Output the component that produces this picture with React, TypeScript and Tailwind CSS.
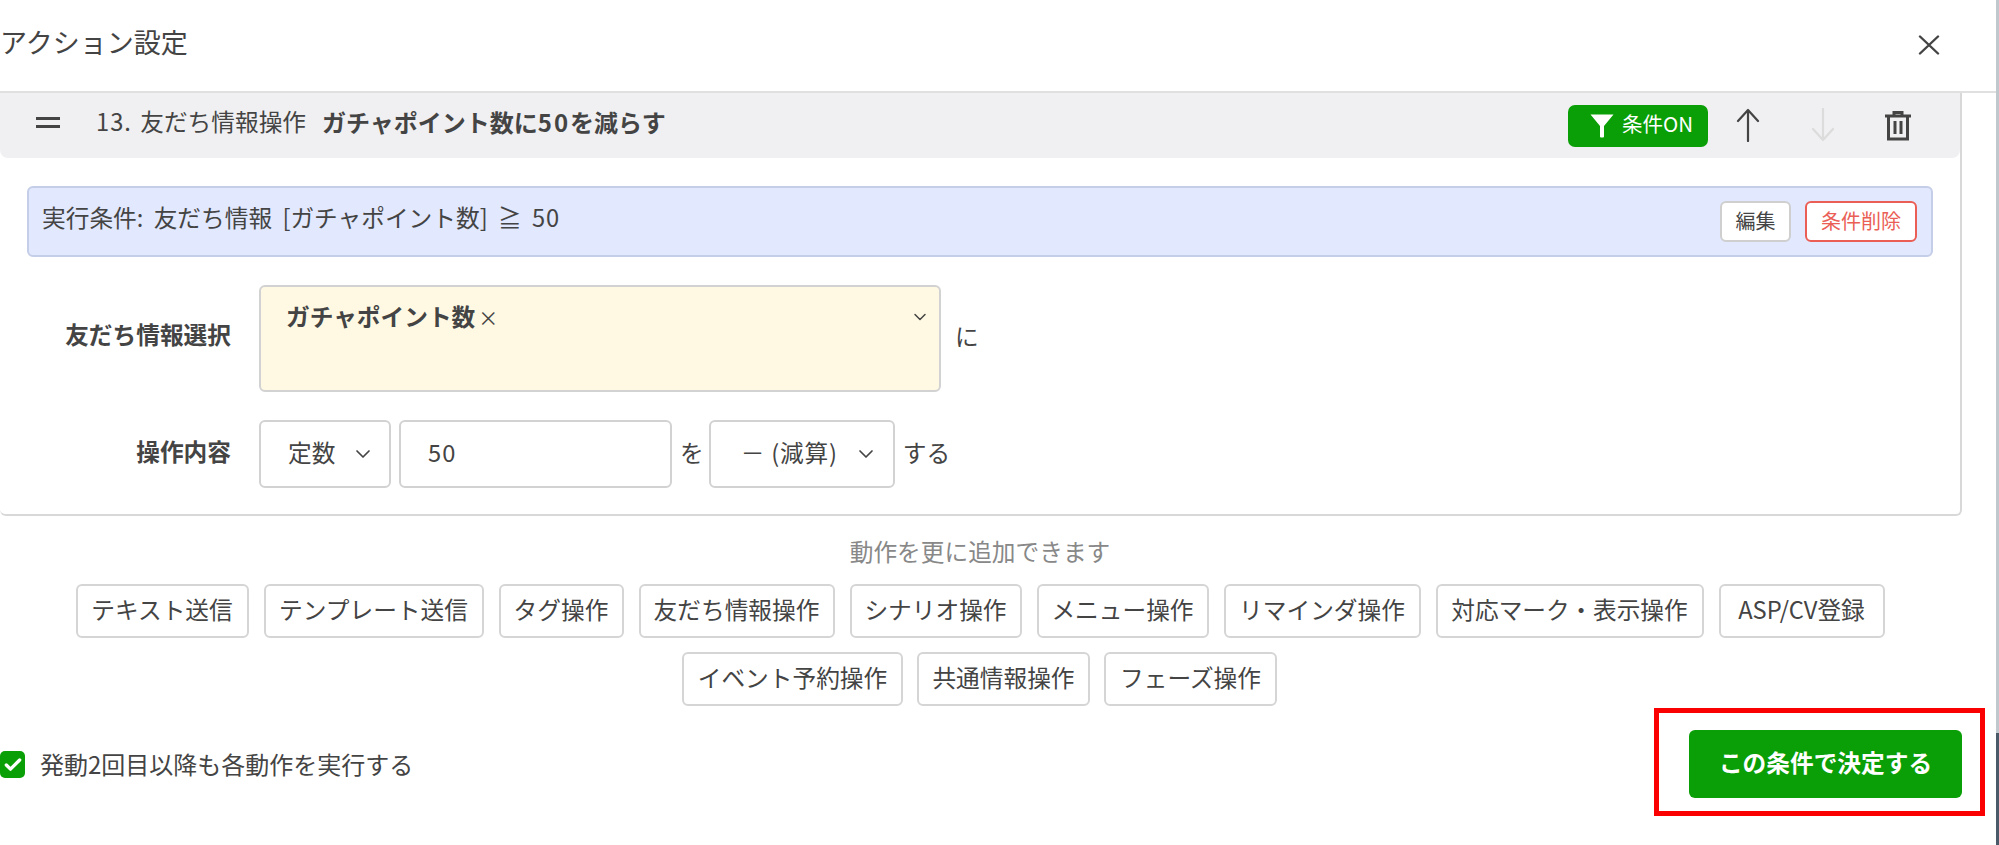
import { ChevronDown, Check } from "lucide-react";

const actionsTop = [
    { label: "テキスト送信", width: "w-[173px]" },
    { label: "テンプレート送信", width: "w-[220px]" },
    { label: "タグ操作", width: "w-[125px]" },
    { label: "友だち情報操作", width: "w-[196px]" },
    { label: "シナリオ操作", width: "w-[172px]" },
    { label: "メニュー操作", width: "w-[172px]" },
    { label: "リマインダ操作", width: "w-[197px]" },
    { label: "対応マーク・表示操作", width: "w-[268px]" },
    { label: "ASP/CV登録", width: "w-[166px]" },
];
const actionsBottom = [
    { label: "イベント予約操作", width: "w-[221px]" },
    { label: "共通情報操作", width: "w-[173px]" },
    { label: "フェーズ操作", width: "w-[173px]" },
];

const ActionButton = ({ label, width }: { label: string, width: string }) => (
    <button className={`${width} h-[54px] bg-white border-2 border-[#d5d5d5] rounded-[6px] pb-[2px] text-[#444] whitespace-nowrap`}>{label}</button>
);

const Arrow = ({ up, color }: { up: boolean, color: string }) => (
    <svg width="24" height="34" viewBox="0 0 24 34" fill="none" stroke={color} strokeWidth="2.2" strokeLinecap="round" strokeLinejoin="round">
        {up ? <path d="M12 33V2M2 13 12 2l10 11" /> : <path d="M12 1v31M2 21l10 11 10-11" />}
    </svg>
);

const App = () => {
    return (
        <div className="flex h-[845px] w-[1999px] overflow-hidden bg-white text-[23.7px] text-[#444] font-['Noto_Sans_CJK_JP','Noto_Sans',sans-serif]">
            <div className="w-[1996px] shrink-0">
                <div className="flex h-[93px] items-center justify-between border-b-2 border-[#e0e0e0] pr-[56px]">
                    <h1 className="text-[27px] leading-none pb-[8px] whitespace-nowrap">アクション設定</h1>
                    <svg width="22" height="20" viewBox="0 0 22 20" fill="none" stroke="#444" strokeWidth="2.4" strokeLinecap="round" className="mb-[2px]">
                        <path d="M2 1.5l18 17M20 1.5 2 18.5" />
                    </svg>
                </div>

                <div className="w-[1962px] h-[423px] border-r-2 border-b-2 border-[#d8d8d8] rounded-b-[6px]">
                    <div className="flex h-[65px] items-center bg-[#f0f0f2] rounded-b-[8px] pl-[36px] pr-[49px]">
                        <div className="flex flex-col gap-[5px] w-[24px] mb-[6px]">
                            <div className="h-[3px] bg-[#444]" />
                            <div className="h-[3px] bg-[#444]" />
                        </div>
                        <span className="ml-[36px] mb-[7px] leading-none whitespace-nowrap [word-spacing:3px]"><span className="tracking-[1px]">13.</span> 友だち情報操作</span>
                        <span className="ml-[16px] mb-[7px] text-[24px] leading-none font-bold whitespace-nowrap">ガチャポイント数に<span className="tracking-[2px]">50</span>を減らす</span>
                        <div className="ml-auto flex h-[42px] w-[140px] items-center rounded-[7px] bg-[#0a9f06] pl-[22px] text-white">
                            <svg width="24" height="24" viewBox="0 0 24 24" fill="white">
                                <path d="M0.5 0.5h23L14 12v10.5a1 1 0 0 1-1 1h-2a1 1 0 0 1-1-1V12Z" />
                            </svg>
                            <span className="ml-[8px] mb-[4px] text-[20.5px] whitespace-nowrap">条件ON</span>
                        </div>
                        <div className="ml-[28px] mt-[-1px]"><Arrow up color="#444" /></div>
                        <div className="ml-[51px] mt-[-1px]"><Arrow up={false} color="#dcdcdc" /></div>
                        <svg width="26" height="30" viewBox="0 0 26 30" fill="none" stroke="#444" strokeWidth="3" className="ml-[50px]">
                            <path d="M0 5h26M9 5V1.5h8V5M3.5 5v23h19V5M10 10v13M16 10v13" />
                        </svg>
                    </div>

                    <div className="mt-[28px] ml-[27px] flex h-[71px] w-[1906px] items-center justify-between rounded-[6px] border-2 border-[#c5cee8] bg-[#e2e8fd] pl-[13px] pr-[14px]">
                        <span className="mb-[7px] whitespace-nowrap [word-spacing:5px]">実行条件: 友だち情報 [ガチャポイント数] ≧ <span className="tracking-[1px]">50</span></span>
                        <div className="flex gap-[14px] text-[20px]">
                            <button className="h-[41px] w-[71px] rounded-[6px] border-2 border-[#cfcfcf] bg-white pb-[2px]">編集</button>
                            <button className="h-[41px] w-[112px] rounded-[6px] border-2 border-[#ea5e55] bg-white pb-[2px] text-[#ea5e55]">条件削除</button>
                        </div>
                    </div>

                    <div className="mt-[28px] flex">
                        <div className="w-[231px] self-center pb-[7px] text-right font-bold whitespace-nowrap">友だち情報選択</div>
                        <div className="relative ml-[28px] h-[107px] w-[682px] rounded-[6px] border-2 border-[#d2d2d2] bg-[#fff9e3] pl-[25px] pt-[12px]">
                            <span className="font-bold">ガチャポイント数</span>
                            <span className="ml-[3px] text-[20px]">×</span>
                            <ChevronDown size={20} strokeWidth={1.8} className="absolute right-[9px] top-[20px]" />
                        </div>
                        <div className="ml-[14px] self-center pb-[4px]">に</div>
                    </div>

                    <div className="mt-[28px] flex items-center">
                        <div className="w-[231px] pb-[4px] text-right font-bold">操作内容</div>
                        <div className="ml-[28px] flex h-[68px] w-[132px] items-center rounded-[6px] border-2 border-[#d2d2d2] pb-[3px] pl-[27px]">
                            定数
                            <ChevronDown size={24} strokeWidth={1.7} className="ml-[16px] mt-[3px]" />
                        </div>
                        <div className="ml-[8px] flex h-[68px] w-[273px] items-center rounded-[6px] border-2 border-[#d2d2d2] pb-[3px] pl-[27px] tracking-[1px]">50</div>
                        <div className="ml-[8px] pb-[3px]">を</div>
                        <div className="ml-[5px] flex h-[68px] w-[186px] items-center rounded-[6px] border-2 border-[#d2d2d2] pb-[3px] pl-[30px] whitespace-nowrap">
                            <span className="tracking-[0.8px]">－ (減算)</span>
                            <ChevronDown size={24} strokeWidth={1.7} className="ml-[16px] mt-[3px]" />
                        </div>
                        <div className="ml-[8px] pb-[3px]">する</div>
                    </div>
                </div>

                <div className="mt-[18px] text-center text-[#888] w-[1960px] leading-[34px]">動作を更に追加できます</div>
                <div className="mt-[16px] flex w-[1960px] justify-center gap-x-[15px]">
                    {actionsTop.map(a => <ActionButton key={a.label} label={a.label} width={a.width} />)}
                </div>
                <div className="mt-[14px] flex w-[1959px] justify-center gap-x-[14px]">
                    {actionsBottom.map(a => <ActionButton key={a.label} label={a.label} width={a.width} />)}
                </div>

                <div className="mt-[24px] flex w-[1962px] items-start justify-between">
                    <label className="mt-[16px] flex items-center">
                        <span className="flex h-[27px] w-[25px] items-center justify-center rounded-[5px] bg-[#0a9f06]">
                            <Check size={20} color="white" strokeWidth={4} />
                        </span>
                        <span className="ml-[15px] mb-[1px] text-[24px] whitespace-nowrap">発動2回目以降も各動作を実行する</span>
                    </label>
                    <div className="relative">
                        <button className="h-[68px] w-[273px] rounded-[6px] bg-[#0a9f06] pb-[2px] font-bold text-white">この条件で決定する</button>
                        <div className="absolute left-[-35px] right-[-23px] top-[-22px] bottom-[-18px] border-[5px] border-[#fa0000]" />
                    </div>
                </div>
            </div>
            <div className="flex w-[3px] flex-col">
                <div className="h-[733px] bg-[#c0c8ce]" />
                <div className="flex-1 bg-[#4a5a68]" />
            </div>
        </div>
    );
};

export default App;
